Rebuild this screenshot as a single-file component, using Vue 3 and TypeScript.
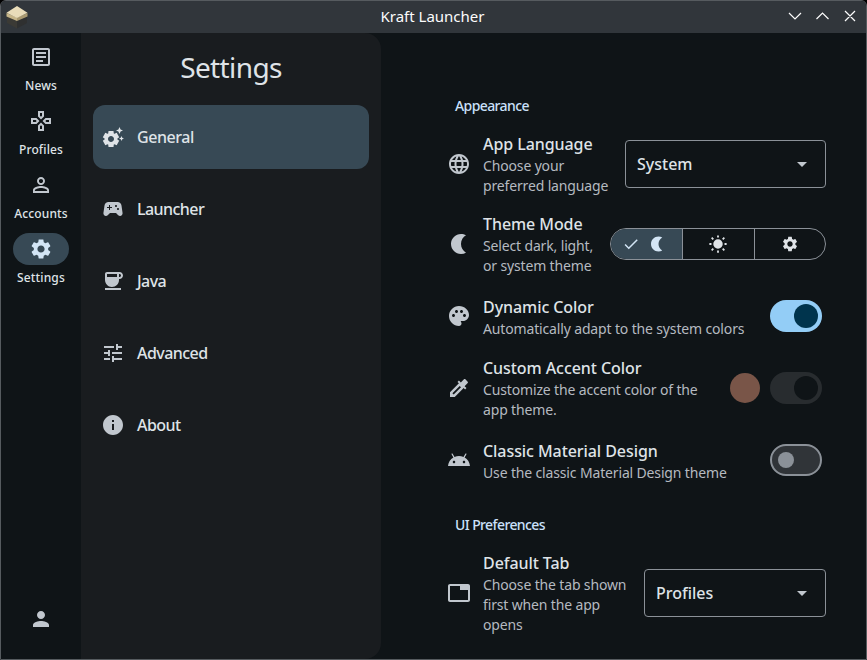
<script setup lang="ts">
import { ref } from 'vue'

interface NavItem { label: string; icon: string }
interface Row { title: string; lines: string[]; icon: string; kind: string; value?: string }

const icons: Record<string, string> = {
  news: 'M19 5v14H5V5h14m0-2H5c-1.1 0-2 .9-2 2v14c0 1.1.9 2 2 2h14c1.1 0 2-.9 2-2V5c0-1.1-.9-2-2-2zM14 17H7v-2h7v2zm3-4H7v-2h10v2zm0-4H7V7h10v2z',
  pad: 'M13 4v2.67l-1 1-1-1V4h2m7 7v2h-2.67l-1-1 1-1H20M6.67 11l1 1-1 1H4v-2h2.67M12 16.33l1 1V20h-2v-2.67l1-1M15 2H9v5.5l3 3 3-3V2zm7 7h-5.5l-3 3 3 3H22V9zM7.5 9H2v6h5.5l3-3-3-3zm4.5 4.5l-3 3V22h6v-5.5l-3-3z',
  personOutline: 'M12 5.9c1.16 0 2.1.94 2.1 2.1s-.94 2.1-2.1 2.1S9.9 9.16 9.9 8s.94-2.1 2.1-2.1m0 9c2.97 0 6.1 1.46 6.1 2.1v1.1H5.9V17c0-.64 3.13-2.1 6.1-2.1M12 4C9.79 4 8 5.79 8 8s1.79 4 4 4 4-1.79 4-4-1.79-4-4-4zm0 9c-2.67 0-8 1.34-8 4v3h16v-3c0-2.66-5.33-4-8-4z',
  person: 'M12 12c2.21 0 4-1.79 4-4s-1.79-4-4-4-4 1.79-4 4 1.79 4 4 4zm0 2c-2.67 0-8 1.34-8 4v2h16v-2c0-2.66-5.33-4-8-4z',
  settings: 'M19.14 12.94c.04-.3.06-.61.06-.94 0-.32-.02-.64-.07-.94l2.03-1.58c.18-.14.23-.41.12-.61l-1.92-3.32c-.12-.22-.37-.29-.59-.22l-2.39.96c-.5-.38-1.03-.7-1.62-.94l-.36-2.54c-.04-.24-.24-.41-.48-.41h-3.84c-.24 0-.43.17-.47.41l-.36 2.54c-.59.24-1.13.57-1.62.94l-2.39-.96c-.22-.08-.47 0-.59.22L2.74 8.87c-.12.21-.08.47.12.61l2.03 1.58c-.05.3-.09.63-.09.94s.02.64.07.94l-2.03 1.58c-.18.14-.23.41-.12.61l1.92 3.32c.12.22.37.29.59.22l2.39-.96c.5.38 1.03.7 1.62.94l.36 2.54c.05.24.24.41.48.41h3.84c.24 0 .44-.17.47-.41l.36-2.54c.59-.24 1.13-.56 1.62-.94l2.39.96c.22.08.47 0 .59-.22l1.92-3.32c.12-.22.07-.47-.12-.61l-2.01-1.58zM12 15.6c-1.98 0-3.6-1.62-3.6-3.6s1.62-3.6 3.6-3.6 3.6 1.62 3.6 3.6-1.62 3.6-3.6 3.6z',
  suggest: 'M17.41 6.59L15 5.5l2.41-1.09L18.5 2l1.09 2.41L22 5.5l-2.41 1.09L18.5 9l-1.09-2.41zm3.87 6.13L20.5 11l-.78 1.72-1.72.78 1.72.78.78 1.72.78-1.72L23 13.5l-1.72-.78zm-5.04 1.65l1.94 1.47-2.5 4.33-2.24-.94c-.2.13-.42.26-.64.37l-.3 2.4h-5l-.3-2.41c-.22-.11-.43-.23-.64-.37l-2.24.94-2.5-4.33 1.94-1.47c-.01-.11-.01-.24-.01-.36s0-.25.01-.37l-1.94-1.47 2.5-4.33 2.24.94c.2-.13.42-.26.64-.37L7.5 6h5l.3 2.41c.22.11.43.23.64.37l2.24-.94 2.5 4.33-1.94 1.47c.01.12.01.24.01.37s0 .24-.01.36zM13 14c0-1.66-1.34-3-3-3s-3 1.34-3 3 1.34 3 3 3 3-1.34 3-3z',
  controller: 'M21.58 16.09l-1.09-7.66C20.21 6.46 18.52 5 16.53 5H7.47C5.48 5 3.79 6.46 3.51 8.43l-1.09 7.66C2.2 17.63 3.39 19 4.94 19c.68 0 1.32-.27 1.8-.75L9 16h6l2.25 2.25c.48.48 1.13.75 1.8.75 1.56 0 2.75-1.37 2.53-2.91zM11 11H9v2H8v-2H6v-1h2V8h1v2h2v1zm4-1c-.55 0-1-.45-1-1s.45-1 1-1 1 .45 1 1-.45 1-1 1zm2 3c-.55 0-1-.45-1-1s.45-1 1-1 1 .45 1 1-.45 1-1 1z',
  coffee: 'M18.5 3H6c-1.1 0-2 .9-2 2v5.71c0 3.83 2.95 7.18 6.78 7.29 3.96.12 7.22-3.06 7.22-7v-1h.5c1.93 0 3.5-1.57 3.5-3.5S20.43 3 18.5 3zM16 5v3H6V5h10zm2.5 3H18V5h.5c.83 0 1.5.67 1.5 1.5S19.33 8 18.5 8zM4 19h16v2H4v-2z',
  tune: 'M3 17v2h6v-2H3zM3 5v2h10V5H3zm10 16v-2h8v-2h-8v-2h-2v6h2zM7 9v2H3v2h4v2h2V9H7zm14 4v-2H11v2h10zm-6-4h2V7h4V5h-4V3h-2v6z',
  info: 'M12 2C6.48 2 2 6.48 2 12s4.48 10 10 10 10-4.48 10-10S17.52 2 12 2zm1 15h-2v-6h2v6zm0-8h-2V7h2v2z',
  globe: 'M11.99 2C6.47 2 2 6.48 2 12s4.47 10 9.99 10C17.52 22 22 17.52 22 12S17.52 2 11.99 2zm6.93 6h-2.95c-.32-1.25-.78-2.45-1.38-3.56 1.84.63 3.37 1.91 4.33 3.56zM12 4.04c.83 1.2 1.48 2.53 1.91 3.96h-3.82c.43-1.43 1.08-2.76 1.91-3.96zM4.26 14C4.1 13.36 4 12.69 4 12s.1-1.36.26-2h3.38c-.08.66-.14 1.32-.14 2s.06 1.34.14 2H4.26zm.82 2h2.95c.32 1.25.78 2.45 1.38 3.56-1.84-.63-3.37-1.9-4.33-3.56zm2.95-8H5.08c.96-1.66 2.49-2.93 4.33-3.56C8.81 5.55 8.35 6.75 8.03 8zM12 19.96c-.83-1.2-1.48-2.53-1.91-3.96h3.82c-.43 1.43-1.08 2.76-1.91 3.96zM14.34 14H9.66c-.09-.66-.16-1.32-.16-2s.07-1.35.16-2h4.68c.09.65.16 1.32.16 2s-.07 1.34-.16 2zm.25 5.56c.6-1.11 1.06-2.31 1.38-3.56h2.95c-.96 1.65-2.49 2.93-4.33 3.56zM16.36 14c.08-.66.14-1.32.14-2s-.06-1.34-.14-2h3.38c.16.64.26 1.31.26 2s-.1 1.36-.26 2h-3.38z',
  moon: 'M14 2c1.82 0 3.53.5 5 1.35-2.99 1.73-5 4.95-5 8.65s2.01 6.92 5 8.65A9.973 9.973 0 0 1 14 22C8.48 22 4 17.52 4 12S8.48 2 14 2z',
  sun: 'M12 5.700a6.300 6.300 0 1 0 0 12.600a6.300 6.300 0 1 0 0-12.600zM10.800 .5h2.400v2.800h-2.400zM10.800 20.700h2.400v2.800h-2.400zM.5 10.800h2.800v2.400H.5zM20.700 10.800h2.800v2.400h-2.800zM4.400 2.700l2.200 2.200-1.700 1.700L2.700 4.400zM19.600 2.700l1.700 1.700-2.200 2.200-1.700-1.700zM4.900 17.400l1.700 1.700L4.400 21.300 2.700 19.600zM19.100 17.400l2.200 2.200-1.700 1.700-2.200-2.200z',
  check: 'M9 16.17L4.83 12l-1.42 1.41L9 19 21 7l-1.41-1.41z',
  palette: 'M12 2C6.49 2 2 6.49 2 12s4.49 10 10 10c1.38 0 2.5-1.12 2.5-2.5 0-.61-.23-1.2-.64-1.67-.08-.1-.13-.21-.13-.33 0-.28.22-.5.5-.5H16c3.31 0 6-2.69 6-6 0-4.96-4.49-9-10-9zm-5.5 11c-.83 0-1.5-.67-1.5-1.5S5.67 10 6.5 10s1.5.67 1.5 1.5S7.33 13 6.5 13zm3-4C8.67 9 8 8.33 8 7.5S8.67 6 9.5 6s1.5.67 1.5 1.5S10.33 9 9.5 9zm5 0c-.83 0-1.5-.67-1.5-1.5S13.67 6 14.5 6s1.5.67 1.5 1.5S15.33 9 14.5 9zm3 4c-.83 0-1.5-.67-1.5-1.5s.67-1.5 1.5-1.5 1.5.67 1.5 1.5-.67 1.5-1.5 1.5z',
  dropper: 'M20.71 5.63l-2.34-2.34c-.39-.39-1.02-.39-1.41 0l-3.12 3.12-1.93-1.91-1.41 1.41 1.42 1.42L3 16.25V21h4.75l8.92-8.92 1.42 1.42 1.41-1.41-1.92-1.92 3.12-3.12c.4-.4.4-1.03.01-1.42zM6.7 18.6L5.4 17.3l7.3-7.3 1.3 1.3L6.7 18.6z',
  android: 'M17.6 9.48l1.84-3.18c.16-.31.04-.69-.26-.85-.29-.15-.65-.06-.83.22l-1.88 3.24c-2.86-1.21-6.08-1.21-8.94 0L5.65 5.67c-.19-.29-.58-.38-.87-.2-.28.18-.37.54-.22.83L6.4 9.48C3.3 11.25 1.28 14.44 1 18h22c-.28-3.56-2.3-6.75-5.4-8.52zM7 15.25c-.69 0-1.25-.56-1.25-1.25s.56-1.25 1.25-1.25 1.25.56 1.25 1.25-.56 1.25-1.25 1.25zm10 0c-.69 0-1.25-.56-1.25-1.25s.56-1.25 1.25-1.25 1.25.56 1.25 1.25-.56 1.25-1.25 1.25z',
  tab: 'M21 3H3c-1.1 0-2 .9-2 2v14c0 1.1.9 2 2 2h18c1.1 0 2-.9 2-2V5c0-1.1-.9-2-2-2zm0 16H3V5h10v4h8v10z',
}

const rail: NavItem[] = [
  { label: 'News', icon: 'news' },
  { label: 'Profiles', icon: 'pad' },
  { label: 'Accounts', icon: 'personOutline' },
  { label: 'Settings', icon: 'settings' },
]
const nav: NavItem[] = [
  { label: 'General', icon: 'suggest' },
  { label: 'Launcher', icon: 'controller' },
  { label: 'Java', icon: 'coffee' },
  { label: 'Advanced', icon: 'tune' },
  { label: 'About', icon: 'info' },
]
const activeRail = ref('Settings')
const activeNav = ref('General')

const sections: { name: string; rows: Row[] }[] = [
  {
    name: 'Appearance',
    rows: [
      { title: 'App Language', lines: ['Choose your', 'preferred language'], icon: 'globe', kind: 'select', value: 'System' },
      { title: 'Theme Mode', lines: ['Select dark, light,', 'or system theme'], icon: 'moon', kind: 'segments' },
      { title: 'Dynamic Color', lines: ['Automatically adapt to the system colors'], icon: 'palette', kind: 'on' },
      { title: 'Custom Accent Color', lines: ['Customize the accent color of the', 'app theme.'], icon: 'dropper', kind: 'disabled' },
      { title: 'Classic Material Design', lines: ['Use the classic Material Design theme'], icon: 'android', kind: 'off' },
    ],
  },
  {
    name: 'UI Preferences',
    rows: [
      { title: 'Default Tab', lines: ['Choose the tab shown', 'first when the app', 'opens'], icon: 'tab', kind: 'select', value: 'Profiles' },
    ],
  },
]
</script>

<template>
  <div class="window">
    <header class="titlebar">
      <svg class="logo" viewBox="0 0 24 24">
        <path d="M2 11l10 5v7.500L2 18z" fill="#3b3a35" />
        <path d="M22 11l-10 5v7.500L22 18z" fill="#2f3030" />
        <path d="M1.500 8L12 12.500V16L1.500 11.500z" fill="#c6b588" />
        <path d="M22.500 8L12 12.500V16l10.500-4.500z" fill="#a99970" />
        <path d="M12 1l10.500 6.800L12 13 1.500 7.800z" fill="#e9dcb9" />
      </svg>
      <span class="caption">Kraft Launcher</span>
      <svg class="controls" viewBox="0 0 72 16">
        <path d="M2 5l6 6 6-6M29.500 11l6-6 6 6M58 3l10 10M68 3l-10 10" />
      </svg>
    </header>
    <div class="body">
      <nav class="rail">
        <button v-for="i in rail" :key="i.label" class="rail-item" :class="{ active: activeRail === i.label }" @click="activeRail = i.label">
          <span class="pill"><svg class="icon" viewBox="0 0 24 24"><path :d="icons[i.icon]" /></svg></span>
          <span class="rail-label">{{ i.label }}</span>
        </button>
        <button class="profile"><svg class="icon" viewBox="0 0 24 24"><path :d="icons.person" /></svg></button>
      </nav>
      <aside class="panel">
        <h1>Settings</h1>
        <button v-for="i in nav" :key="i.label" class="nav-item" :class="{ active: activeNav === i.label }" @click="activeNav = i.label">
          <svg class="icon" viewBox="0 0 24 24"><path :d="icons[i.icon]" /></svg>
          <span>{{ i.label }}</span>
        </button>
      </aside>
      <main class="content">
        <section v-for="s in sections" :key="s.name">
          <h2>{{ s.name }}</h2>
          <div v-for="r in s.rows" :key="r.title" class="row" :class="{ short: r.lines.length === 1 }">
            <svg class="icon" viewBox="0 0 24 24"><path :d="icons[r.icon]" /></svg>
            <div class="text">
              <div class="title">{{ r.title }}</div>
              <div v-for="l in r.lines" :key="l" class="sub">{{ l }}</div>
            </div>
            <div v-if="r.kind === 'select'" class="select" :class="r.icon">
              <span>{{ r.value }}</span>
              <svg class="icon" viewBox="0 0 24 24"><path d="M7 10l5 5 5-5z" /></svg>
            </div>
            <div v-else-if="r.kind === 'segments'" class="segments">
              <span class="seg on">
                <svg viewBox="0 0 24 24"><path :d="icons.check" /></svg>
                <svg viewBox="0 0 24 24"><path :d="icons.moon" /></svg>
              </span>
              <span class="seg"><svg viewBox="0 0 24 24"><path :d="icons.sun" /></svg></span>
              <span class="seg"><svg viewBox="0 0 24 24"><path :d="icons.settings" /></svg></span>
            </div>
            <template v-else>
              <span v-if="r.kind === 'disabled'" class="swatch"></span>
              <span class="switch" :class="r.kind"><span class="thumb"></span></span>
            </template>
          </div>
        </section>
      </main>
    </div>
  </div>
</template>

<style>
html, body { margin: 0; background: #000; overflow: hidden; }
</style>

<style scoped>
* { box-sizing: border-box; }
.window {
  width: 867px; height: 660px; display: flex; flex-direction: column; overflow: hidden;
  border: 1px solid #565b5f; border-radius: 6px 6px 0 0; background: #0f1417;
  font-family: "Noto Sans", sans-serif; color: #dfe3e7;
}
button { border: 0; padding: 0; background: none; color: inherit; font: inherit; }
svg { display: block; flex: none; }
.icon { width: 24px; height: 24px; fill: #c1c7ce; }
.titlebar { height: 32px; flex: none; display: grid; grid-template-columns: 100px 1fr 100px; align-items: center; background: #31363b; }
.logo { width: 24px; height: 24px; margin: -1px 0 0 4px; }
.caption { text-align: center; font-size: 15px; line-height: 20px; margin-top: -3px; padding-right: 2px; color: #fcfcfc; white-space: nowrap; }
.controls { width: 72px; height: 16px; margin: -2px 0 0 21px; fill: none; stroke: #fcfcfc; stroke-width: 1.2; }
.body { flex: 1; display: flex; min-height: 0; }
.rail { width: 80px; display: flex; flex-direction: column; align-items: center; padding: 8px 0 28px; }
.rail-item { height: 64px; width: 80px; display: flex; flex-direction: column; align-items: center; gap: 4px; }
.pill { width: 56px; height: 32px; border-radius: 16px; display: flex; align-items: center; justify-content: center; }
.active .pill { background: #374955; }
.active .pill .icon { fill: #d3e5f5; }
.rail-label { font-size: 12px; line-height: 18px; font-weight: 500; letter-spacing: .14px; }
.profile { margin-top: auto; }
.panel { width: 300px; padding: 16px 12px 0; background: #191c1f; border-radius: 0 16px 16px 0; display: flex; flex-direction: column; gap: 8px; }
h1 { margin: 0 0 12px; height: 36px; text-align: center; font-size: 28px; line-height: 37px; font-weight: 400; letter-spacing: -.6px; }
.nav-item { height: 64px; flex: none; border-radius: 12px; padding-left: 8px; display: flex; align-items: center; gap: 12px; font-size: 16px; letter-spacing: -.55px; font-weight: 500; }
.nav-item.active { background: #374955; }
.nav-item:first-of-type { letter-spacing: -.45px; }
.nav-item.active .icon { fill: #dfe3e7; }
.content { flex: 1; min-width: 0; padding: 62px 40px 0 66px; }
h2 { margin: 0 0 0 8px; height: 29px; line-height: 21px; font-size: 14px; font-weight: 500; letter-spacing: -.6px; color: #cbe1fb; }
section + section { padding-top: 22px; }
.row { display: flex; align-items: center; padding: 8px 0; }
.row.short { height: 64px; padding: 0; }
.short .text { padding-top: 2px; }
.text { margin-left: 12px; flex: 1; white-space: nowrap; min-width: 0; }
.title { font-size: 16px; line-height: 24px; font-weight: 500; letter-spacing: -.07px; }
.sub { font-size: 14px; line-height: 20px; color: #b5bac0; letter-spacing: -.15px; }
.select { height: 48px; width: 201px; border: 1px solid #8b9198; border-radius: 4px; padding: 0 11px; display: flex; align-items: center; justify-content: space-between; font-size: 16px; font-weight: 500; }
.select.tab { width: 182px; }
.segments { width: 216px; height: 32px; border: 1px solid #8b9198; border-radius: 16px; display: flex; overflow: hidden; }
.seg { flex: 1; display: flex; align-items: center; justify-content: center; gap: 8px; }
.seg + .seg { border-left: 1px solid #8b9198; }
.seg svg { width: 18px; height: 18px; fill: #dfe3e7; }
.seg.on { background: #374955; padding-right: 6px; flex: 0 0 71px; }
.seg.on svg { fill: #d3e5f5; }
.swatch { width: 30px; height: 30px; border-radius: 50%; background: #795548; margin-right: 10px; }
.switch { width: 52px; height: 32px; border-radius: 16px; margin-right: 4px; padding: 4px; display: flex; align-items: center; justify-content: flex-end; }
.thumb { width: 24px; height: 24px; border-radius: 50%; }
.on.switch { background: #93cdf6; }
.on .thumb { background: #00344d; }
.disabled.switch { background: #282c2f; }
.disabled .thumb { background: #0f1417; }
.off.switch { background: #303438; border: 2px solid #8b9198; justify-content: flex-start; padding: 6px; }
.off .thumb { width: 16px; height: 16px; background: #8b9198; }
</style>
